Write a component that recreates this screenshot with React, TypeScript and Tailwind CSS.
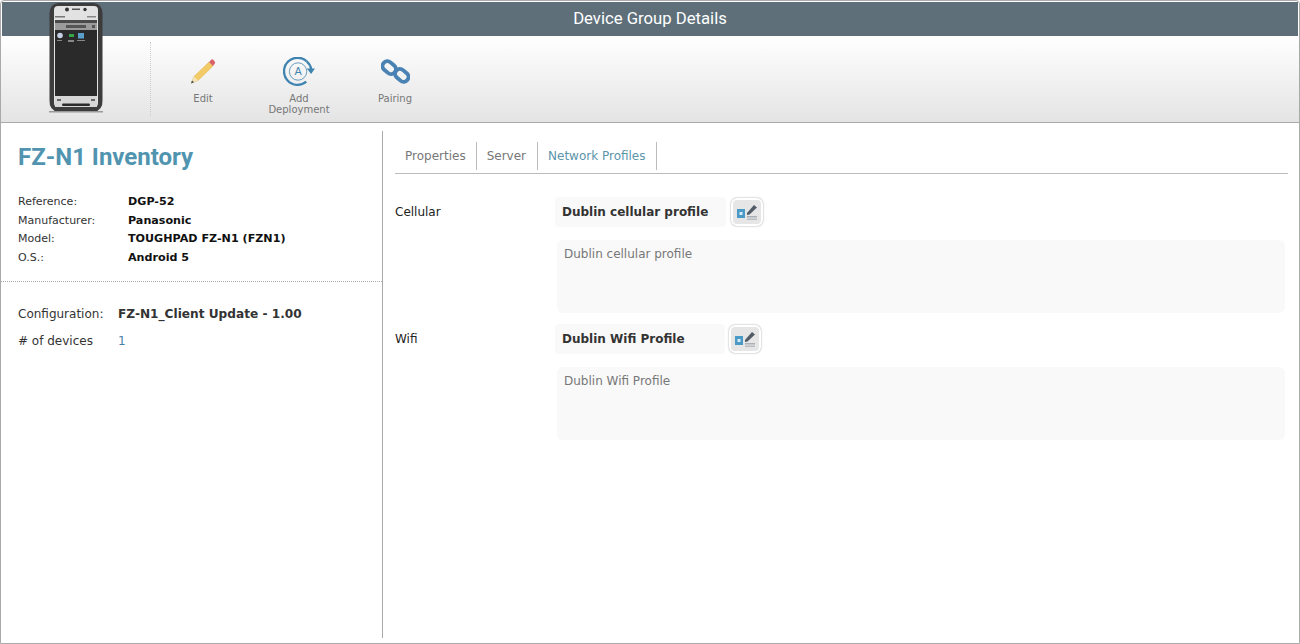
import React from "react";

const font = "font-['DejaVu_Sans',sans-serif]";

function Phone() {
  return (
    <svg width="54" height="110" viewBox="0 0 54 110" className="absolute left-[48px] top-[2px]">
      <path d="M9 0 H45 Q53 1 53.500 10 V97 Q54 107 45 109 H9 Q0 107 .5 97 V10 Q1 1 9 0 Z" fill="#3c3c3c" />
      <rect x="0" y="108" width="54" height="1.500" fill="#9a9a9a" />
      <rect x="5" y="3" width="44" height="101" rx="4" fill="#e2e2e2" />
      <circle cx="18" cy="6.500" r="2" fill="#333" />
      <rect x="23" y="5.500" width="8" height="1.500" fill="#555" />
      <circle cx="36" cy="6.500" r="1.700" fill="#333" />
      <rect x="6" y="13" width="10" height="1.500" fill="#777" />
      <rect x="38" y="13" width="9" height="1.500" fill="#888" />
      <rect x="6" y="17" width="42" height="3" fill="#4a4a4a" />
      <rect x="6" y="20" width="42" height="7" fill="#9b9b9b" />
      <rect x="17" y="22" width="20" height="3" fill="#555" />
      <rect x="43" y="22" width="3" height="3" fill="#555" />
      <rect x="6" y="27" width="42" height="66" fill="#2a2a2a" />
      <circle cx="11" cy="32.500" r="2.800" fill="#c6cfe6" />
      <rect x="20" y="31" width="5" height="3" fill="#35a648" />
      <rect x="29" y="30" width="6" height="5.500" fill="#5a9fc9" />
      <rect x="8" y="37" width="5" height="1" fill="#888" />
      <rect x="19" y="37" width="6" height="2" fill="#888" />
      <rect x="28" y="37" width="8" height="1" fill="#888" />
      <rect x="6" y="93" width="42" height="11" fill="#d6d6d6" />
      <rect x="8" y="96" width="4" height="2" fill="#666" />
      <rect x="42" y="96" width="4" height="2" fill="#666" />
      <rect x="13" y="100.500" width="28" height="2.500" rx="1.200" fill="#2a2a2a" />
    </svg>
  );
}

function Pencil() {
  return (
    <svg width="26" height="26" viewBox="0 0 26 26">
      <path d="M1.500 25 L4 18.500 L19 4 L23 8 L8 22.500 Z" fill="#f3cb66" stroke="#dcae42" strokeWidth="0.5" />
      <path d="M4 18.500 L8 22.500 L1.500 25 Z" fill="#f4e2bb" />
      <path d="M1 25.500 L2 22.500 L4 24.300 Z" fill="#444" />
      <path d="M19 4 L21.500 1.500 Q22.500 1 23.500 2 L25 4 Q25.500 5 24.500 6 L23 8 Z" fill="#d9626a" />
    </svg>
  );
}

function Deployment() {
  return (
    <svg width="33" height="29" viewBox="0 0 34 30">
      <path d="M24.500 4.500 A14 14 0 1 0 24 25.500" fill="none" stroke="#3f84b0" strokeWidth="2.400" />
      <path d="M24.500 4.500 Q28.500 8 29 12.500" fill="none" stroke="#3f84b0" strokeWidth="2.400" />
      <path d="M24.500 12 L33 12 L29 17.500 Z" fill="#3f84b0" />
      <circle cx="15.500" cy="15" r="9" fill="none" stroke="#3f84b0" strokeWidth="0.800" />
      <text x="15.500" y="19" textAnchor="middle" fontSize="11" fill="#3f84b0" fontFamily="DejaVu Sans">A</text>
    </svg>
  );
}

function Chain() {
  return (
    <svg width="29" height="29" viewBox="0 0 30 30">
      <g fill="none" stroke="#4a82b4" strokeWidth="4">
        <rect x="1" y="6" width="15" height="10" rx="5" transform="rotate(40 8.500 11)" />
        <rect x="14" y="14" width="15" height="10" rx="5" transform="rotate(40 21.500 19)" />
      </g>
    </svg>
  );
}

function ProfileIcon() {
  return (
    <svg width="21" height="16" viewBox="0 0 21 16">
      <rect x="0" y="5" width="8" height="9" fill="#4a9ac8" />
      <rect x="2.500" y="8" width="3" height="3" fill="#d7ecf7" />
      <path d="M10 9 L17 1 L20 3.500 L12.500 10.500 L10 11 Z" fill="#525c66" />
      <rect x="10" y="12" width="10" height="1.500" fill="#aab0b5" />
      <rect x="10" y="14.500" width="10" height="1.500" fill="#b8bdc1" />
    </svg>
  );
}

function ToolButton({ label, icon }: { label: React.ReactNode; icon: React.ReactNode }) {
  return (
    <div className="flex w-[96px] flex-col items-center">
      <div className="flex h-[32px] items-center justify-center">{icon}</div>
      <div className="mt-[6px] text-center text-[10px] leading-[11px] text-[#777]">{label}</div>
    </div>
  );
}

function ProfileRow({ label, name, nameWidth, buttonGap }: { label: string; name: string; nameWidth: string; buttonGap: string }) {
  return (
    <div className="flex flex-col">
      <div className="flex items-center">
        <div className="w-[160px] text-xs text-[#222]">{label}</div>
        <div className={`flex h-[30px] items-center rounded bg-[#f9f9f9] pl-[7px] text-xs font-bold text-[#333] ${nameWidth}`}>
          {name}
        </div>
        <button className={`flex h-[28px] w-[32px] items-center justify-center rounded-md border-2 border-white bg-[#e6e6e6] shadow-[0_0_2px_#999] ${buttonGap}`}>
          <ProfileIcon />
        </button>
      </div>
      <div className="mt-[13px] mr-[3px] ml-[162px] h-[73px] rounded-md bg-[#f9f9f9] px-[7px] pt-[6px] text-xs text-[#777]">{name}</div>
    </div>
  );
}

export default function App() {
  return (
    <div className={`relative flex h-[644px] w-[1300px] flex-col rounded-t border border-[#aaa] bg-white pt-px ${font}`}>
      <div className="mx-px flex h-[34px] items-center justify-center bg-[#5e6f7a] font-['Roboto',sans-serif] text-[16.700px] text-white">
        Device Group Details
      </div>
      <div className="flex h-[87px] border-b border-[#aaa] bg-gradient-to-b from-white to-[#e4e4e4]">
        <div className="my-[6px] ml-[149px] mr-[4px] border-l border-dotted border-[#ccc]" />
        <div className="flex pt-[19px]">
          <ToolButton label="Edit" icon={<Pencil />} />
          <ToolButton label={<>Add<br />Deployment</>} icon={<Deployment />} />
          <ToolButton label="Pairing" icon={<Chain />} />
        </div>
      </div>
      <Phone />
      <div className="flex min-h-0 flex-1 pt-[8px] pb-[5px]">
        <div className="w-[382px] border-r border-[#aaa]">
          <h1 className="px-[17px] pt-[12px] font-['Roboto',sans-serif] text-2xl leading-[28px] font-bold text-[#5194b0]">
            FZ-N1 Inventory
          </h1>
          <div className="grid grid-cols-[110px_1fr] px-[17px] pt-[22px] pb-[14px] text-[11px] leading-[18.500px] text-[#333]">
            <div>Reference:</div><div className="text-[11.150px] font-bold text-[#111]">DGP-52</div>
            <div>Manufacturer:</div><div className="text-[11.150px] font-bold text-[#111]">Panasonic</div>
            <div>Model:</div><div className="text-[11.150px] font-bold text-[#111]">TOUGHPAD FZ-N1 (FZN1)</div>
            <div>O.S.:</div><div className="text-[11.150px] font-bold text-[#111]">Android 5</div>
          </div>
          <div className="border-t border-dotted border-[#aaa] px-[17px] pt-[24px] text-xs text-[#333]">
            <div className="flex">
              <div className="w-[100px]">Configuration:</div>
              <div className="text-[12.150px] font-bold">FZ-N1_Client Update - 1.00</div>
            </div>
            <div className="mt-[11px] flex">
              <div className="w-[100px]"># of devices</div>
              <div className="text-[#4a7fa5]">1</div>
            </div>
          </div>
        </div>
        <div className="flex-1 pr-[11px] pl-[12px]">
          <div className="flex h-[43px] items-center border-b border-[#bbb] pt-[8px] text-xs text-[#777]">
            <div className="border-r border-[#bbb] px-[10px] py-[6px]">Properties</div>
            <div className="border-r border-[#bbb] pr-[11px] pl-[10px] py-[6px]">Server</div>
            <div className="border-r border-[#bbb] px-[10px] py-[6px] text-[#5b95ab]">Network Profiles</div>
          </div>
          <div className="flex flex-col gap-[11px] pt-[23px]">
            <ProfileRow label="Cellular" name="Dublin cellular profile" nameWidth="w-[171px]" buttonGap="ml-[5px]" />
            <ProfileRow label="Wifi" name="Dublin Wifi Profile" nameWidth="w-[170px]" buttonGap="ml-[4px]" />
          </div>
        </div>
      </div>
    </div>
  );
}
